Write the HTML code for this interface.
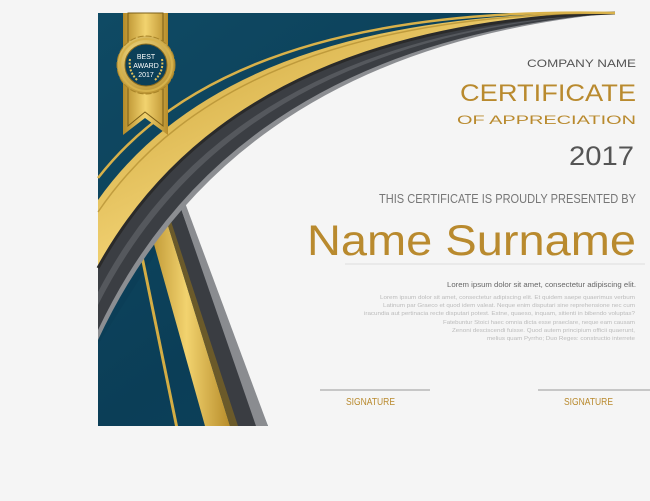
<!DOCTYPE html>
<html><head><meta charset="utf-8"><style>
html,body{margin:0;padding:0;background:#f5f5f5;}
svg{display:block;font-family:"Liberation Sans",sans-serif;}
</style></head><body>
<svg width="650" height="501" viewBox="0 0 650 501" xmlns="http://www.w3.org/2000/svg">
<defs>
<linearGradient id="teal" x1="0" y1="0" x2="1" y2="1">
<stop offset="0" stop-color="#0f4a64"/><stop offset="0.5" stop-color="#0b3e57"/><stop offset="1" stop-color="#0d4560"/>
</linearGradient>
<linearGradient id="gold" x1="0" y1="0" x2="1" y2="1">
<stop offset="0" stop-color="#c9a036"/><stop offset="0.5" stop-color="#f0d070"/><stop offset="1" stop-color="#c49a30"/>
</linearGradient>
<linearGradient id="gold2" x1="0" y1="0" x2="1" y2="0">
<stop offset="0" stop-color="#b48a28"/><stop offset="0.5" stop-color="#f2d36f"/><stop offset="1" stop-color="#b88d2b"/>
</linearGradient>
<radialGradient id="medal" cx="0.4" cy="0.35" r="0.7">
<stop offset="0" stop-color="#f6df8a"/><stop offset="1" stop-color="#b8902e"/>
</radialGradient>
</defs>
<rect x="98" y="13" width="552" height="413" fill="url(#teal)"/>
<!-- white area -->
<path d="M98,335 Q233,46 615,13 L650,13 L650,426 L268,426 L180,212 Z" fill="#f5f5f5"/>
<polygon points="98,200 182,200 182,212 98,345" fill="url(#teal)"/>
<!-- lower straight bands -->
<polygon points="131,210 134,210 178,426 175,426" fill="#d4ad44"/>
<polygon points="143,205 161,203 230,426 205,426" fill="url(#gold2)"/>
<polygon points="161,203 166,200 240,426 230,426" fill="#6b5a2a"/>
<polygon points="164,200 178,200 258,426 238,426" fill="#3a3d42"/>
<polygon points="178,200 184,200 268,426 256,426" fill="#8a8c90"/>
<!-- arc bands -->
<path d="M98,335 Q233,46 615,13 Q233,23.5 98,268 Z" fill="#3b3e43"/>
<path d="M98,340 Q233,50 615,13 Q233,44 98,330 Z" fill="#8c8e92"/>
<path d="M98,305 Q233,36 615,13 Q233,32 98,292 Z" fill="#55585d"/>
<path d="M98,268 Q233,23.5 615,13 Q233,9.5 98,200 Z" fill="url(#gold)"/>
<path d="M98,268 Q233,23.5 615,13" fill="none" stroke="#2a2a2a" stroke-width="3"/>
<path d="M98,212 Q233,13 615,13" fill="none" stroke="#a98428" stroke-width="1.5" opacity="0.6"/>
<path d="M98,178 Q233,4.5 615,13" fill="none" stroke="#d8b14a" stroke-width="2.5"/>
<!-- ribbon -->
<polygon points="123,13 168,13 168,135 145,118 123,135" fill="url(#gold2)"/>
<polygon points="128,13 163,13 163,126 145,112 128,126" fill="none" stroke="#7a5e18" stroke-width="1"/>
<!-- medal -->
<g transform="translate(146,65)">
<circle r="29" fill="url(#medal)" stroke="#a88428" stroke-width="1" stroke-dasharray="6 2"/>
<circle r="26" fill="none" stroke="#d6b24c" stroke-width="2"/>
<circle r="21" fill="#0c3f58" stroke="#8a6a1e" stroke-width="1"/>
<text x="0" y="-6" font-size="7" fill="#fff" text-anchor="middle">BEST</text>
<text x="0" y="3" font-size="7" fill="#fff" text-anchor="middle">AWARD</text>
<text x="0" y="12" font-size="7" fill="#fff" text-anchor="middle">2017</text>
<path d="M-16,-6 Q-18,6 -9,15" fill="none" stroke="#e2c25c" stroke-width="2" stroke-dasharray="2 1.5"/>
<path d="M16,-6 Q18,6 9,15" fill="none" stroke="#e2c25c" stroke-width="2" stroke-dasharray="2 1.5"/>
</g>
<!-- text -->
<g text-anchor="end">
<text x="636" y="67" font-size="11" fill="#555" textLength="109" lengthAdjust="spacingAndGlyphs">COMPANY NAME</text>
<text x="636" y="101" font-size="24" fill="#b98a2e" textLength="176" lengthAdjust="spacingAndGlyphs">CERTIFICATE</text>
<text x="636" y="124" font-size="12" fill="#b98a2e" textLength="179" lengthAdjust="spacingAndGlyphs">OF APPRECIATION</text>
<text x="634" y="165" font-size="27" fill="#555" textLength="65" lengthAdjust="spacingAndGlyphs">2017</text>
<text x="636" y="203" font-size="12.5" fill="#777" textLength="257" lengthAdjust="spacingAndGlyphs">THIS CERTIFICATE IS PROUDLY PRESENTED BY</text>
<text x="636" y="255" font-size="43" fill="#b98a2e" textLength="329" lengthAdjust="spacingAndGlyphs">Name Surname</text>
<text x="636" y="287" font-size="7.5" fill="#666" textLength="189" lengthAdjust="spacingAndGlyphs">Lorem ipsum dolor sit amet, consectetur adipiscing elit.</text>
<g font-size="5.5" fill="#bbb">
<text x="635" y="299" textLength="255" lengthAdjust="spacingAndGlyphs">Lorem ipsum dolor sit amet, consectetur adipiscing elit. Et quidem saepe quaerimus verbum</text>
<text x="635" y="307" textLength="252" lengthAdjust="spacingAndGlyphs">Latinum par Graeco et quod idem valeat. Neque enim disputari sine reprehensione nec cum</text>
<text x="635" y="315" textLength="271" lengthAdjust="spacingAndGlyphs">iracundia aut pertinacia recte disputari potest. Estne, quaeso, inquam, sitienti in bibendo voluptas?</text>
<text x="635" y="324" textLength="192" lengthAdjust="spacingAndGlyphs">Fatebuntur Stoici haec omnia dicta esse praeclare, neque eam causam</text>
<text x="635" y="332" textLength="183" lengthAdjust="spacingAndGlyphs">Zenoni desciscendi fuisse. Quod autem principium officii quaerunt,</text>
<text x="635" y="340" textLength="148" lengthAdjust="spacingAndGlyphs">melius quam Pyrrho; Duo Reges: constructio interrete</text>
</g>
</g>
<line x1="320" y1="390" x2="430" y2="390" stroke="#999" stroke-width="1"/>
<line x1="538" y1="390" x2="650" y2="390" stroke="#999" stroke-width="1"/>
<text x="346" y="405" font-size="10" fill="#b98a2e" textLength="49" lengthAdjust="spacingAndGlyphs">SIGNATURE</text>
<text x="564" y="405" font-size="10" fill="#b98a2e" textLength="49" lengthAdjust="spacingAndGlyphs">SIGNATURE</text>
<line x1="345" y1="264" x2="645" y2="264" stroke="#ddd" stroke-width="1"/>
</svg>
</body></html>
